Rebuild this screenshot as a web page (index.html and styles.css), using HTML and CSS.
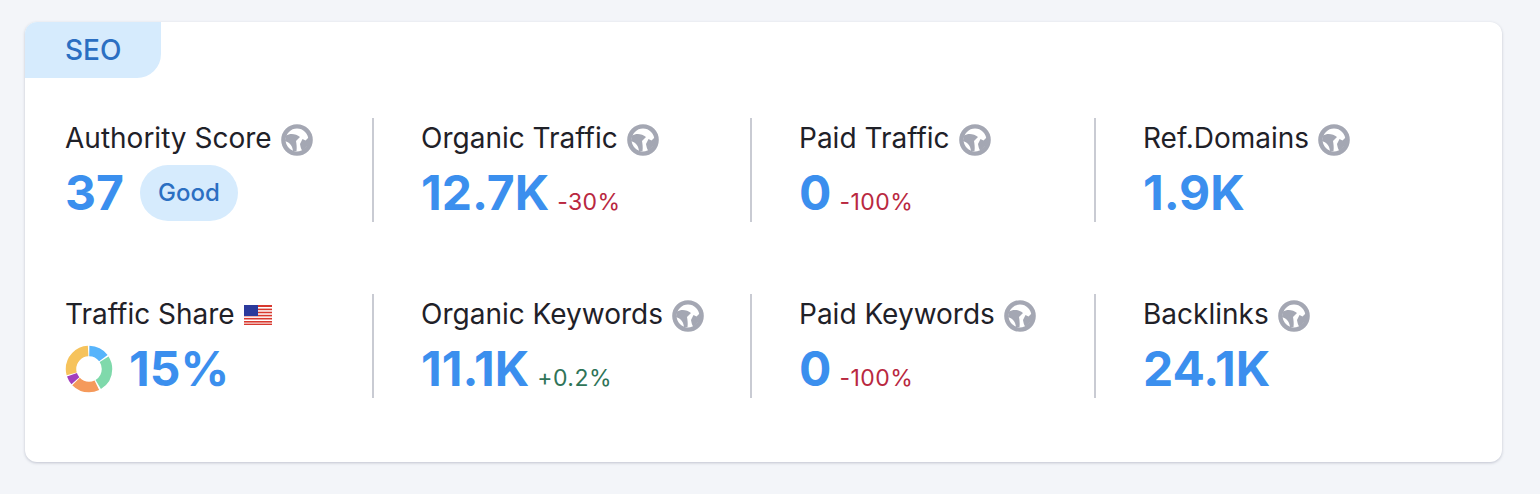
FILE: index.html
```html
<!DOCTYPE html>
<html lang="en">
<head>
<meta charset="utf-8">
<title>SEO</title>
<link rel="stylesheet" href="styles.css">
</head>
<body>
<svg class="defs" width="0" height="0" aria-hidden="true">
  <symbol id="globe" viewBox="0 0 32 32">
    <circle cx="16" cy="16" r="13.6" fill="none" stroke="#a4a7b3" stroke-width="4.4"/>
    <path d="M5 11.5 C9 9 15 9.5 19 13 L15 17 C15.5 20 16 23 15.5 27 L12 27 C11.5 22 9 18.5 4 17Z" fill="#a4a7b3"/>
    <path d="M28 13 L24.5 16.5 L21.5 15 L19 20 C19.500 23 20 25 21.500 27 C25 24 27.500 21 29 16Z" fill="#a4a7b3"/>
  </symbol>
</svg>
<main class="card">
  <div class="tab">SEO</div>
  <div class="grid">
    <section class="cell">
      <div class="label">Authority Score <svg class="globe"><use href="#globe"/></svg></div>
      <div class="line"><span class="value">37</span><span class="pill">Good</span></div>
    </section>
    <section class="cell">
      <div class="label">Organic Traffic <svg class="globe"><use href="#globe"/></svg></div>
      <div class="line"><span class="value">12.7K</span><span class="delta down">-30%</span></div>
    </section>
    <section class="cell">
      <div class="label">Paid Traffic <svg class="globe"><use href="#globe"/></svg></div>
      <div class="line"><span class="value">0</span><span class="delta down">-100%</span></div>
    </section>
    <section class="cell">
      <div class="label">Ref.Domains <svg class="globe"><use href="#globe"/></svg></div>
      <div class="line"><span class="value">1.9K</span></div>
    </section>
    <section class="cell">
      <div class="label">Traffic Share
        <svg class="flag" viewBox="0 0 28 20">
          <rect width="28" height="20" fill="#fff"/>
          <g fill="#d8392f">
            <rect width="28" height="2"/><rect y="3.6" width="28" height="1.6"/><rect y="6.7" width="28" height="1.6"/><rect y="9.8" width="28" height="1.6"/><rect y="12.9" width="28" height="1.6"/><rect y="16" width="28" height="1.6"/><rect y="18.6" width="28" height="1.4"/>
          </g>
          <rect width="14" height="11" fill="#2b3a9c"/>
        </svg>
      </div>
      <div class="line share">
        <svg class="donut" viewBox="0 0 48 48">
          <g fill="none" stroke-width="10.5" transform="rotate(-90 24 24)">
            <circle cx="24" cy="24" r="18" pathLength="360" stroke="#f6c35c" stroke-dasharray="103 257" stroke-dashoffset="-254"/>
            <circle cx="24" cy="24" r="18" pathLength="360" stroke="#57b4fb" stroke-dasharray="52 308" stroke-dashoffset="-1"/>
            <circle cx="24" cy="24" r="18" pathLength="360" stroke="#7fd9ab" stroke-dasharray="92 268" stroke-dashoffset="-57"/>
            <circle cx="24" cy="24" r="18" pathLength="360" stroke="#f59a5b" stroke-dasharray="72 288" stroke-dashoffset="-154"/>
            <circle cx="24" cy="24" r="18" pathLength="360" stroke="#a33fbd" stroke-dasharray="22 338" stroke-dashoffset="-229"/>
          </g>
        </svg>
        <span class="value">15%</span>
      </div>
    </section>
    <section class="cell">
      <div class="label">Organic Keywords <svg class="globe"><use href="#globe"/></svg></div>
      <div class="line"><span class="value">11.1K</span><span class="delta up">+0.2%</span></div>
    </section>
    <section class="cell">
      <div class="label">Paid Keywords <svg class="globe"><use href="#globe"/></svg></div>
      <div class="line"><span class="value">0</span><span class="delta down">-100%</span></div>
    </section>
    <section class="cell">
      <div class="label">Backlinks <svg class="globe"><use href="#globe"/></svg></div>
      <div class="line"><span class="value">24.1K</span></div>
    </section>
  </div>
</main>
</body>
</html>
```
FILE: styles.css
```css
* { box-sizing: border-box; }
html, body { margin: 0; height: 100%; }
body {
  background: #f3f5f9;
  padding: 22px 38px 32px 25px;
  font-family: Inter, "Liberation Sans", sans-serif;
  color: #1f2128;
}
.defs { position: absolute; }
.card {
  height: 440px;
  background: #fff;
  border-radius: 12px;
  box-shadow: 0 1px 3px rgba(60, 70, 100, .28);
  overflow: hidden;
}
.tab {
  width: 136px;
  height: 56px;
  background: #d6ebfd;
  border-bottom-right-radius: 24px;
  padding: 12px 0 0 40px;
  color: #2b6fc2;
  font-size: 28px;
  line-height: 32px;
  font-weight: 500;
}
.grid {
  display: grid;
  grid-template-columns: 307px 378px 344px 1fr;
  grid-auto-rows: 104px;
  row-gap: 72px;
  margin: 40px 0 0 40px;
}
.cell { border-left: 2px solid #c9cbd3; padding-left: 47px; }
.cell:nth-child(4n+1) { border-left: 0; padding-left: 0; }
.label {
  display: flex;
  align-items: center;
  gap: 9px;
  height: 40px;
  font-size: 28px;
  line-height: 40px;
  white-space: nowrap;
}
.globe { width: 32px; height: 32px; flex: none; margin-top: 3px; }
.flag { width: 28px; height: 20px; flex: none; margin-top: 2px; }
.line { display: flex; align-items: center; height: 56px; margin-top: 7px; }
.value {
  font-size: 48px;
  line-height: 56px;
  font-weight: 700;
  color: #3b8fee;
}
.pill {
  margin-left: 16px;
  width: 98px;
  height: 56px;
  border-radius: 28px;
  background: #d6ebfd;
  color: #2b6fc2;
  font-size: 24px;
  font-weight: 500;
  line-height: 56px;
  text-align: center;
}
.delta { margin-left: 8px; margin-top: 18px; font-size: 23px; letter-spacing: .45px; }
.down { color: #b9283f; }
.up { color: #2f7458; }
.share { gap: 16px; }
.donut { width: 48px; height: 48px; flex: none; }
```
